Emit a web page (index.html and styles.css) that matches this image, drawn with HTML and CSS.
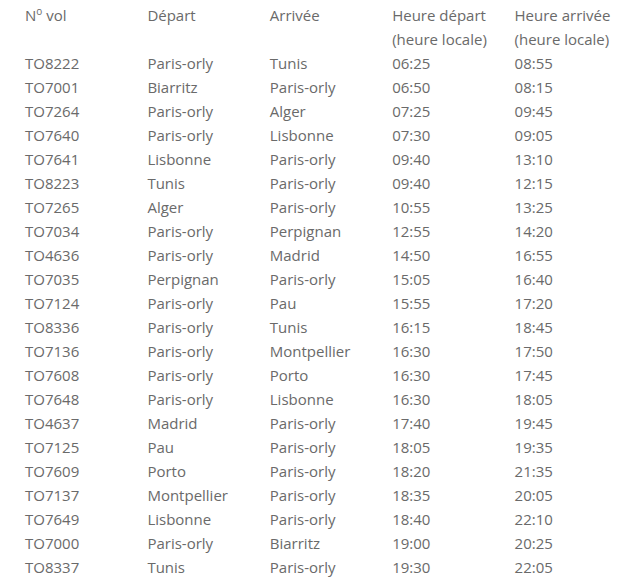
FILE: index.html
```html
<!DOCTYPE html>
<html lang="fr">
<head>
<meta charset="utf-8">
<link rel="stylesheet" href="styles.css">
</head>
<body>
<table class="flights">
<thead>
<tr><th>N<sup>o</sup> vol</th><th>Départ</th><th>Arrivée</th><th>Heure départ (heure locale)</th><th>Heure arrivée (heure locale)</th></tr>
</thead>
<tbody>
<tr><td>TO8222</td><td>Paris-orly</td><td>Tunis</td><td>06:25</td><td>08:55</td></tr>
<tr><td>TO7001</td><td>Biarritz</td><td>Paris-orly</td><td>06:50</td><td>08:15</td></tr>
<tr><td>TO7264</td><td>Paris-orly</td><td>Alger</td><td>07:25</td><td>09:45</td></tr>
<tr><td>TO7640</td><td>Paris-orly</td><td>Lisbonne</td><td>07:30</td><td>09:05</td></tr>
<tr><td>TO7641</td><td>Lisbonne</td><td>Paris-orly</td><td>09:40</td><td>13:10</td></tr>
<tr><td>TO8223</td><td>Tunis</td><td>Paris-orly</td><td>09:40</td><td>12:15</td></tr>
<tr><td>TO7265</td><td>Alger</td><td>Paris-orly</td><td>10:55</td><td>13:25</td></tr>
<tr><td>TO7034</td><td>Paris-orly</td><td>Perpignan</td><td>12:55</td><td>14:20</td></tr>
<tr><td>TO4636</td><td>Paris-orly</td><td>Madrid</td><td>14:50</td><td>16:55</td></tr>
<tr><td>TO7035</td><td>Perpignan</td><td>Paris-orly</td><td>15:05</td><td>16:40</td></tr>
<tr><td>TO7124</td><td>Paris-orly</td><td>Pau</td><td>15:55</td><td>17:20</td></tr>
<tr><td>TO8336</td><td>Paris-orly</td><td>Tunis</td><td>16:15</td><td>18:45</td></tr>
<tr><td>TO7136</td><td>Paris-orly</td><td>Montpellier</td><td>16:30</td><td>17:50</td></tr>
<tr><td>TO7608</td><td>Paris-orly</td><td>Porto</td><td>16:30</td><td>17:45</td></tr>
<tr><td>TO7648</td><td>Paris-orly</td><td>Lisbonne</td><td>16:30</td><td>18:05</td></tr>
<tr><td>TO4637</td><td>Madrid</td><td>Paris-orly</td><td>17:40</td><td>19:45</td></tr>
<tr><td>TO7125</td><td>Pau</td><td>Paris-orly</td><td>18:05</td><td>19:35</td></tr>
<tr><td>TO7609</td><td>Porto</td><td>Paris-orly</td><td>18:20</td><td>21:35</td></tr>
<tr><td>TO7137</td><td>Montpellier</td><td>Paris-orly</td><td>18:35</td><td>20:05</td></tr>
<tr><td>TO7649</td><td>Lisbonne</td><td>Paris-orly</td><td>18:40</td><td>22:10</td></tr>
<tr><td>TO7000</td><td>Paris-orly</td><td>Biarritz</td><td>19:00</td><td>20:25</td></tr>
<tr><td>TO8337</td><td>Tunis</td><td>Paris-orly</td><td>19:30</td><td>22:05</td></tr>
</tbody>
</table>
</body>
</html>
```
FILE: styles.css
```css
html, body { margin: 0; padding: 0; background: #fff; }
body { padding: 3px 0 0 25px; }
.flights {
  border-collapse: collapse;
  table-layout: fixed;
  width: 612px;
  font-family: "Open Sans", sans-serif;
  font-size: 15px;
  color: #6a6a6a;
}
.flights th, .flights td {
  width: 122.4px;
  padding: 0;
  text-align: left;
  vertical-align: top;
  font-weight: normal;
  line-height: 24px;
  height: 24px;
  white-space: nowrap;
}
.flights th { white-space: normal; }
.flights sup { font-size: 10px; line-height: 0; vertical-align: 6px; }
```
